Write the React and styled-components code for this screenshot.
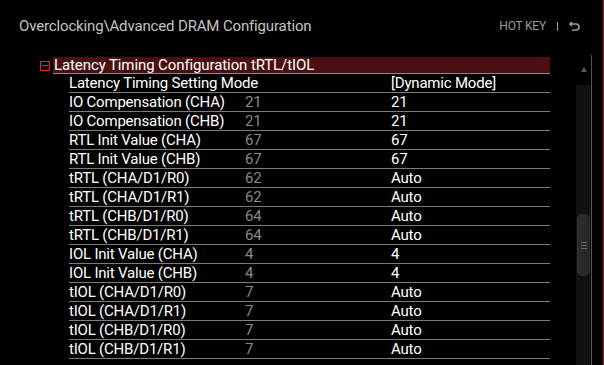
import React from 'react';
import styled, { createGlobalStyle } from 'styled-components';

const GlobalStyle = createGlobalStyle`
  html, body {
    margin: 0;
    padding: 0;
    background: #000;
  }
  body {
    font-family: Roboto, "Liberation Sans", sans-serif;
  }
`;

const rows = [
  { name: 'Latency Timing Setting Mode', cur: '', value: '[Dynamic Mode]' },
  { name: 'IO Compensation (CHA)', cur: '21', value: '21' },
  { name: 'IO Compensation (CHB)', cur: '21', value: '21' },
  { name: 'RTL Init Value (CHA)', cur: '67', value: '67' },
  { name: 'RTL Init Value (CHB)', cur: '67', value: '67' },
  { name: 'tRTL (CHA/D1/R0)', cur: '62', value: 'Auto' },
  { name: 'tRTL (CHA/D1/R1)', cur: '62', value: 'Auto' },
  { name: 'tRTL (CHB/D1/R0)', cur: '64', value: 'Auto' },
  { name: 'tRTL (CHB/D1/R1)', cur: '64', value: 'Auto' },
  { name: 'IOL Init Value (CHA)', cur: '4', value: '4' },
  { name: 'IOL Init Value (CHB)', cur: '4', value: '4' },
  { name: 'tIOL (CHA/D1/R0)', cur: '7', value: 'Auto' },
  { name: 'tIOL (CHA/D1/R1)', cur: '7', value: 'Auto' },
  { name: 'tIOL (CHB/D1/R0)', cur: '7', value: 'Auto' },
  { name: 'tIOL (CHB/D1/R1)', cur: '7', value: 'Auto' }
];

const Screen = styled.div`
  width: 603px;
  height: 365px;
  background: #000;
  border-right: 1px solid #b01818;
  overflow: hidden;
  display: flex;
  flex-direction: column;
`;

const TopBar = styled.div`
  height: 57px;
  display: flex;
  align-items: flex-start;
  justify-content: space-between;
  padding: 17px 23px 0 19px;
  box-sizing: border-box;
`;

const PageTitle = styled.div`
  font-size: 15px;
  color: #c4c4c4;
  letter-spacing: -0.15px;
`;

const HotKey = styled.div`
  display: flex;
  align-items: center;
  gap: 9px;
  padding-top: 2px;
  font-size: 12px;
  color: #9a9a9a;
  letter-spacing: -0.2px;
`;

const Divider = styled.span`
  width: 1px;
  height: 9px;
  background: #9a9a9a;
  margin: 0 2px;
`;

const Main = styled.div`
  flex: 1;
  display: flex;
`;

const Content = styled.div`
  width: 550px;
  padding-left: 40px;
  box-sizing: border-box;
`;

const Header = styled.div`
  display: flex;
  align-items: center;
`;

const Collapse = styled.span`
  width: 8px;
  height: 8px;
  border: 1px solid #ff1a1a;
  margin-right: 3px;
  display: flex;
  align-items: center;
  justify-content: center;
  &::after {
    content: '';
    width: 6px;
    height: 1px;
    background: #ff1a1a;
  }
`;

const HeaderBar = styled.div`
  flex: 1;
  height: 16px;
  line-height: 16px;
  background: #4a1011;
  border-bottom: 1px solid #8a8a8a;
  color: #fff;
  font-size: 15px;
  letter-spacing: -0.1px;
  padding-left: 1px;
`;

const List = styled.div`
  margin-left: 29px;
`;

const Row = styled.div`
  display: grid;
  grid-template-columns: 176px 146px 1fr;
  height: 18px;
  line-height: 18px;
  border-bottom: 1px solid #7c7c7c;
  font-size: 15px;
  letter-spacing: -0.2px;
  color: #fff;
  white-space: nowrap;
`;

const Current = styled.span`
  color: #888;
`;

const ScrollArea = styled.div`
  width: 42px;
  display: flex;
  justify-content: flex-end;
  padding-right: 10px;
`;

const Track = styled.div`
  width: 15px;
  margin-top: -3px;
  border-right: 1px solid #555;
  border-top-right-radius: 3px;
  display: flex;
  flex-direction: column;
  align-items: center;
`;

const Arrow = styled.div`
  margin-top: 13px;
  width: 0;
  height: 0;
  border-left: 3px solid transparent;
  border-right: 3px solid transparent;
  border-bottom: 5px solid #5a5a5a;
  margin-left: 1px;
`;

const Rail = styled.div`
  margin-top: 13px;
  flex: 1;
  align-self: stretch;
  background: #111;
  padding-top: 129px;
  display: flex;
  justify-content: center;
`;

const Thumb = styled.div`
  width: 13px;
  height: 62px;
  border-radius: 5px;
  background: linear-gradient(90deg, #2c2c2c, #262626);
  display: flex;
  flex-direction: column;
  align-items: center;
  justify-content: center;
  gap: 2px;
`;

const Grip = styled.span`
  width: 6px;
  height: 1px;
  background: #6a6a6a;
`;

export default function App() {
  return (
    <>
      <GlobalStyle />
      <Screen>
        <TopBar>
          <PageTitle>Overclocking\Advanced DRAM Configuration</PageTitle>
          <HotKey>
            HOT KEY
            <Divider />
            <svg width="11" height="10" viewBox="0 0 11 10" fill="none" stroke="#9a9a9a" strokeWidth="1.6">
              <path d="M3 1 L1 3 L3 5" />
              <path d="M1 3 H7 A3 3 0 0 1 7 9 H3" />
            </svg>
          </HotKey>
        </TopBar>
        <Main>
          <Content>
            <Header>
              <Collapse />
              <HeaderBar>Latency Timing Configuration tRTL/tIOL</HeaderBar>
            </Header>
            <List>
              {rows.map((r) => (
                <Row key={r.name}>
                  <span>{r.name}</span>
                  <Current>{r.cur}</Current>
                  <span>{r.value}</span>
                </Row>
              ))}
            </List>
          </Content>
          <ScrollArea>
            <Track>
              <Arrow />
              <Rail>
                <Thumb>
                  <Grip />
                  <Grip />
                  <Grip />
                </Thumb>
              </Rail>
            </Track>
          </ScrollArea>
        </Main>
      </Screen>
    </>
  );
}
